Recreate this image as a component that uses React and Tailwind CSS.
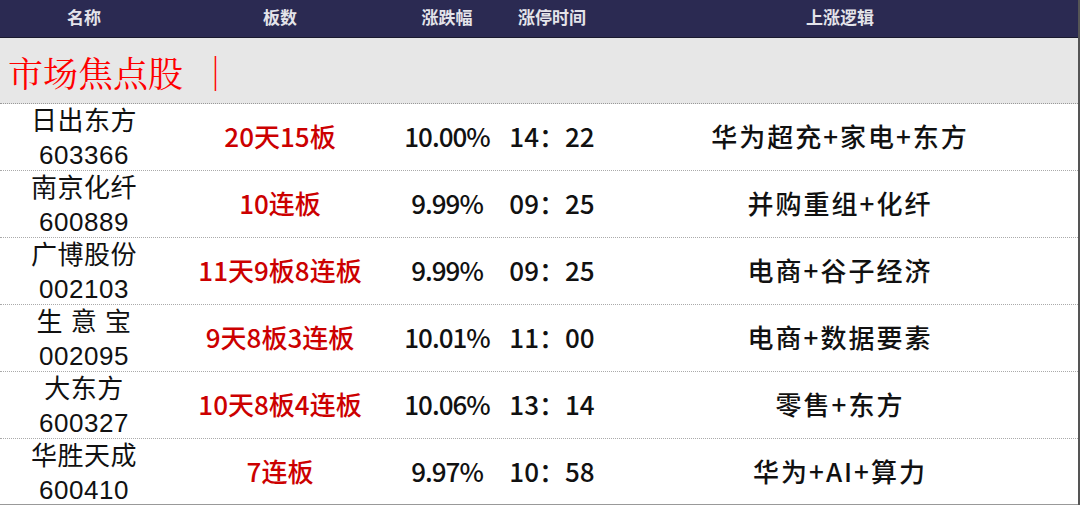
const rows = [
  { name: "日出东方", code: "603366", boards: "20天15板", pct: "10.00%", time: "14：22", logic: "华为超充+家电+东方" },
  { name: "南京化纤", code: "600889", boards: "10连板", pct: "9.99%", time: "09：25", logic: "并购重组+化纤" },
  { name: "广博股份", code: "002103", boards: "11天9板8连板", pct: "9.99%", time: "09：25", logic: "电商+谷子经济" },
  { name: "生 意 宝", code: "002095", boards: "9天8板3连板", pct: "10.01%", time: "11：00", logic: "电商+数据要素" },
  { name: "大东方", code: "600327", boards: "10天8板4连板", pct: "10.06%", time: "13：14", logic: "零售+东方" },
  { name: "华胜天成", code: "600410", boards: "7连板", pct: "9.97%", time: "10：58", logic: "华为+AI+算力" },
];

const sans = "font-['Liberation_Sans','Noto_Sans_CJK_SC',sans-serif]";
const cjk = "font-['Noto_Sans_CJK_SC','Liberation_Sans',sans-serif]";
const cols = "grid grid-cols-[168px_224px_110px_100px_1fr]";

export default function App() {
  return (
    <div className={`w-[1080px] h-[505px] overflow-hidden bg-white ${sans} border-r-2 border-[#555]`}>
      {/* header */}
      <div className={`${cols} h-[38px] bg-[#2b2a52] border-b border-[#1a1a2e] text-[17px] font-bold text-[#e4e4ea] items-center`}>
        <div className="text-center">名称</div>
        <div className="text-center">板数</div>
        <div className="text-center">涨跌幅</div>
        <div className="text-center">涨停时间</div>
        <div className="text-center">上涨逻辑</div>
      </div>

      {/* section title */}
      <div className="h-[66px] bg-[#e7e7e7] border-b border-dotted border-[#999] flex items-center pl-[8px]">
        <span className="font-['Noto_Serif_CJK_SC','Source_Han_Serif_SC','AR_PL_UMing_CN','Noto_Sans_CJK_SC',serif] text-[35px] text-[#ff0000] leading-none pt-[4px]">
          市场焦点股 <span className="ml-[6px]">｜</span>
        </span>
      </div>

      {rows.map((r, i) => (
        <div
          key={r.code}
          className={`${cols} items-center ${
            i === rows.length - 1
              ? "h-[66px] border-b border-solid border-[#999]"
              : "h-[67px] border-b border-dotted border-[#aaa]"
          }`}
        >
          <div className="text-center text-[26px] leading-[34px] text-[#111] tracking-[0.5px]">
            <div>{r.name}</div>
            <div>{r.code}</div>
          </div>
          <div className={`text-center text-[26px] leading-[34px] pb-[4px] font-medium text-[#cc0000] ${cjk}`}>{r.boards}</div>
          <div className={`text-center text-[26px] leading-[34px] pb-[4px] font-medium tracking-[-1px] text-[#111] ${cjk}`}>{r.pct}</div>
          <div className={`text-center text-[26px] leading-[34px] pb-[4px] font-medium text-[#111] ${cjk}`}>{r.time}</div>
          <div className={`text-center text-[26px] leading-[34px] pb-[4px] font-medium tracking-[2px] text-[#111] ${cjk}`}>{r.logic}</div>
        </div>
      ))}
    </div>
  );
}
